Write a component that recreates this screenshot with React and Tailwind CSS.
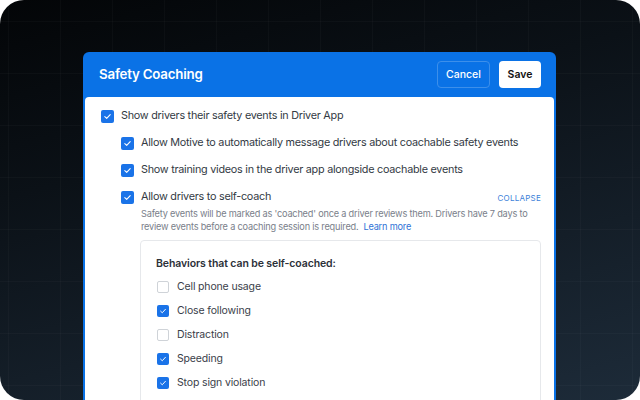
import React from "react";

function Check({ checked, size = 13 }) {
  if (!checked) {
    return (
      <span
        className="shrink-0 rounded-[2px] border border-[#cfd3d8] bg-white"
        style={{ width: size, height: size }}
      />
    );
  }
  return (
    <span
      className="shrink-0 rounded-[2px] bg-[#1a73e8] flex items-center justify-center"
      style={{ width: size, height: size }}
    >
      <svg width={size - 4} height={size - 4} viewBox="0 0 10 10" fill="none">
        <path d="M2 5.2 L4.1 7.2 L8 2.9" stroke="white" strokeWidth="1.2" strokeLinecap="round" strokeLinejoin="round" />
      </svg>
    </span>
  );
}

function Row({ checked, children }) {
  return (
    <div className="flex items-center gap-[7px] h-[27px]">
      <Check checked={checked} />
      <span className="text-[10.8px] tracking-[-0.25px] text-[#333a44] whitespace-nowrap">{children}</span>
    </div>
  );
}

function Item({ checked, label }) {
  return (
    <div className="flex items-center gap-[8px] h-[24px] pl-[1px]">
      <Check checked={checked} size={12} />
      <span className="text-[10.5px] tracking-[-0.15px] text-[#3a4049]">{label}</span>
    </div>
  );
}

export default function App() {
  return (
    <div className="w-[640px] h-[400px] bg-white" style={{ fontFamily: "Inter, 'Noto Sans', sans-serif" }}>
      <div className="relative w-full h-full rounded-[24px] overflow-hidden bg-[linear-gradient(165deg,#030507_0%,#0b1117_35%,#1d2b39_100%)]">
        <svg className="absolute inset-0" width="640" height="400">
          <defs>
            <pattern id="grid" x="8" y="21" width="52" height="52" patternUnits="userSpaceOnUse">
              <path d="M52 0 L0 0 L0 52" fill="none" stroke="#ffffff" strokeOpacity="0.045" strokeWidth="1" />
            </pattern>
          </defs>
          <rect width="640" height="400" fill="url(#grid)" />
        </svg>
        <div className="relative ml-[83px] mt-[52px] w-[473px] h-[348px] bg-[#0a72e6] rounded-t-[6px] px-[2px] flex flex-col">
          <div className="h-[45px] shrink-0 flex items-center justify-between pl-[14px] pr-[13px]">
            <span className="text-white text-[13.3px] tracking-[-0.2px] font-semibold">Safety Coaching</span>
            <div className="flex items-center gap-[9px]">
              <button className="w-[53px] h-[27px] rounded-[4px] border border-[#3d8fea] text-white text-[10.5px] font-medium">Cancel</button>
              <button className="w-[42px] h-[27px] rounded-[4px] bg-white text-[#111] text-[10.5px] font-semibold">Save</button>
            </div>
          </div>
          <div className="flex-1 bg-white rounded-t-[4px] pl-[16px] pt-[6px]">
            <Row checked>Show drivers their safety events in Driver App</Row>
            <div className="pl-[20px]">
              <Row checked>Allow Motive to automatically message drivers about coachable safety events</Row>
              <Row checked>Show training videos in the driver app alongside coachable events</Row>
              <div className="flex items-center h-[27px] pr-[13px]">
                <div className="flex items-center gap-[7px]">
                  <Check checked />
                  <span className="text-[10.8px] tracking-[-0.25px] text-[#333a44]">Allow drivers to self-coach</span>
                </div>
                <span className="ml-auto text-[8px] tracking-[0.03em] text-[#3b7fd9]">COLLAPSE</span>
              </div>
              <p className="-mt-[4px] ml-[20px] w-[400px] text-[9.2px] tracking-[-0.2px] leading-[13px] text-[#7a808a]">
                Safety events will be marked as 'coached' once a driver reviews them. Drivers have 7 days to review events before a coaching session is required.
                <span className="inline-block ml-[5px] text-[#2f73d6]">Learn more</span>
              </p>
              <div className="ml-[19px] mr-[13px] mt-[7px] rounded-[4px] border border-[#e6e8eb] pl-[15px] pt-[15px] h-[200px]">
                <div className="text-[10.5px] tracking-[-0.1px] font-semibold text-[#2b3038] leading-[16px]">Behaviors that can be self-coached:</div>
                <div className="mt-[3px]">
                  <Item label="Cell phone usage" />
                  <Item checked label="Close following" />
                  <Item label="Distraction" />
                  <Item checked label="Speeding" />
                  <Item checked label="Stop sign violation" />
                </div>
              </div>
            </div>
          </div>
        </div>
      </div>
    </div>
  );
}
